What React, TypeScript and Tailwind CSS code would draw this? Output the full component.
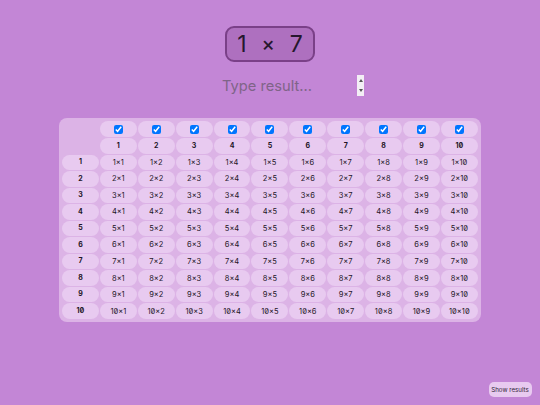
const nums = [1, 2, 3, 4, 5, 6, 7, 8, 9, 10];

export default function App() {
  return (
    <div className="flex h-[405px] w-[540px] flex-col items-center overflow-hidden bg-[#c386d6] font-['Inter',sans-serif] text-[#1d1526] antialiased slashed-zero">
      <div className="mt-[26px] flex h-[36px] w-[90px] items-center justify-center gap-[15px] rounded-[9px] border-2 border-[#7a4088] bg-[#ae70bf] text-[23px] leading-none text-[#26172e]">
        <span>1</span>
        <span className="text-[20px] font-medium">×</span>
        <span>7</span>
      </div>
      <div className="mt-[12px] ml-[222px] flex h-[22px] w-[142px] items-center justify-between self-start">
        <span className="mt-[2px] text-[14.7px] leading-none text-[#7f6488]">Type result...</span>
        <div className="flex h-[21px] w-[7px] flex-col items-center justify-center gap-[7px] bg-[#f3eef5]">
          <span className="h-0 w-0 border-x-[2.5px] border-b-[3px] border-x-transparent border-b-[#555]" />
          <span className="h-0 w-0 border-x-[2.5px] border-t-[3px] border-x-transparent border-t-[#555]" />
        </div>
      </div>
      <div className="mt-[22px] grid w-[422px] grid-cols-[repeat(11,36.9px)] gap-x-px gap-y-px rounded-[8px] bg-[#dcb3e6] p-[3px]">
        <div />
        {nums.map((n) => (
          <div key={n} className="flex h-[16px] items-center justify-center rounded-[8px] bg-[#e8caf0]">
            <input type="checkbox" defaultChecked className="m-0 h-[9px] w-[9px] accent-[#0075ff]" />
          </div>
        ))}
        <div />
        {nums.map((n) => (
          <div key={n} className="flex h-[15.55px] items-center justify-center rounded-[8px] bg-[#e8caf0] text-[7px] font-bold">
            {n}
          </div>
        ))}
        {nums.map((r) => (
          <div key={r} className="contents">
            <div className="flex h-[15.55px] items-center justify-center rounded-[8px] bg-[#e8caf0] text-[7px] font-bold">
              {r}
            </div>
            {nums.map((c) => (
              <div key={c} className="flex h-[15.55px] items-center justify-center rounded-[8px] bg-[#e8caf0] text-[7.5px]">
                {r}×{c}
              </div>
            ))}
          </div>
        ))}
      </div>
      <div className="mt-auto mr-[8.5px] mb-[8px] self-end">
        <button className="flex h-[15px] w-[43px] items-center justify-center rounded-[5px] bg-[#e8caf0] text-[6.2px] whitespace-nowrap text-[#33263a]">
          Show results
        </button>
      </div>
    </div>
  );
}
